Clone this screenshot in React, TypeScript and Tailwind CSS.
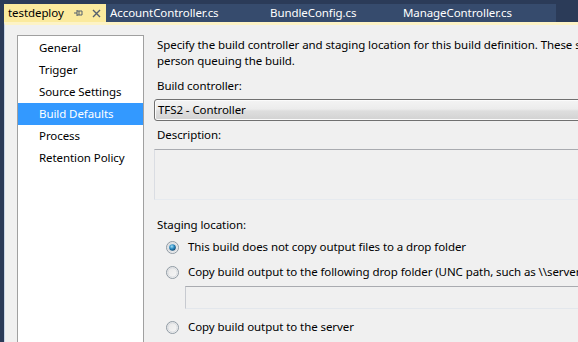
import React from "react";

const navItems = ["General", "Trigger", "Source Settings", "Build Defaults", "Process", "Retention Policy"];

function Radio({ checked }: { checked?: boolean }) {
  return (
    <svg width="13" height="13" viewBox="0 0 13 13" className="shrink-0">
      <defs>
        <linearGradient id={checked ? "rc" : "ru"} x1="0" y1="0" x2="1" y2="1">
          <stop offset="0" stopColor="#e6e6e6" />
          <stop offset="1" stopColor="#f8f8f8" />
        </linearGradient>
        <radialGradient id="dot" cx="0.4" cy="0.35" r="0.7">
          <stop offset="0" stopColor="#a9e0f5" />
          <stop offset="0.5" stopColor="#2a8bc2" />
          <stop offset="1" stopColor="#0d3d66" />
        </radialGradient>
      </defs>
      <circle cx="6.5" cy="6.5" r="6" fill={`url(#${checked ? "rc" : "ru"})`} stroke="#8f9aa3" strokeWidth="1" />
      <circle cx="6.5" cy="6.5" r="4.6" fill="none" stroke="#d2d6da" strokeWidth="0.8" />
      {checked && <circle cx="6.5" cy="6.5" r="3.3" fill="url(#dot)" />}
    </svg>
  );
}

export default function App() {
  return (
    <div
      className="flex h-[342px] w-[578px] flex-col overflow-hidden bg-[#2b3b58] text-[11.5px] tracking-[-0.08px] text-black"
      style={{ fontFamily: '"Segoe UI", "Noto Sans", sans-serif' }}
    >
      {/* Tab strip */}
      <div className="flex h-[22px] shrink-0 pl-[4px] pt-[4px]">
        <div className="flex h-[18px] w-[102px] items-center bg-[#fbea9e] pl-[4px]">
          <span className="w-[66px] leading-[18px]">testdeploy</span>
          <svg width="10" height="8" viewBox="0 0 10 8">
            <path d="M0 4h3M3 1v6M3 2h5v4H3M5 2v4" stroke="#55606e" strokeWidth="1" fill="none" />
          </svg>
          <svg width="9" height="9" viewBox="0 0 9 9" className="ml-[8px]">
            <path d="M1 1l7 7M8 1l-7 7" stroke="#55606e" strokeWidth="1.4" />
          </svg>
        </div>
        <div className="flex h-[18px] w-[450px] items-center bg-[#364b6d] text-white">
          <span className="ml-[4px] w-[160px] leading-[18px]">AccountController.cs</span>
          <span className="w-[133px] leading-[18px]">BundleConfig.cs</span>
          <span className="leading-[18px]">ManageController.cs</span>
        </div>
      </div>

      {/* Body */}
      <div className="flex min-h-0 flex-1 pl-[4px]">
        <div className="flex flex-1 border-l border-t-[3px] border-l-[#c9d6e6] border-t-[#fdf3c6] bg-[#f0f0f0]">
          {/* Nav list */}
          <div className="ml-[12px] mt-[10px] w-[127px] shrink-0 border border-b-0 border-[#a0a0a0] bg-white pt-[1px]">
            {navItems.map((item) => (
              <div
                key={item}
                className={
                  item === "Build Defaults"
                    ? "h-[22px] bg-[#3399ff] pl-[21px] leading-[22px] text-white"
                    : "h-[22px] pl-[21px] leading-[22px]"
                }
              >
                {item}
              </div>
            ))}
          </div>

          {/* Settings */}
          <div className="ml-[10px] flex w-[640px] shrink-0 flex-col pt-[12px]">
            <div className="pl-[3px] leading-[16px]">
              <div className="whitespace-nowrap">
                Specify the build controller and staging location for this build definition. These settings can be
                overridden by the
              </div>
              <div className="whitespace-nowrap">person queuing the build.</div>
            </div>

            <div className="mt-[9px] pl-[3px] leading-[16px]">Build controller:</div>
            <div className="mt-[5px] h-[22px] rounded-[3px] border border-[#707070] bg-[linear-gradient(to_bottom,#f4f4f4_0%,#ececec_45%,#dedede_55%,#d2d2d2_100%)] pl-[3px] leading-[20px] shadow-[inset_0_0_0_1px_#fbfbfb]">
              TFS2 - Controller
            </div>

            <div className="mt-[6px] pl-[3px] leading-[16px]">Description:</div>
            <div className="mt-[6px] h-[51px] border border-x-[#dadde3] border-b-[#e6eaef] border-t-[#a9abb0] bg-[#f0f0f0]" />

            <div className="mt-[17px] pl-[3px] leading-[16px]">Staging location:</div>

            <div className="ml-[12px] mt-[6px] flex h-[16px] items-center gap-[9px]">
              <Radio checked />
              <span className="whitespace-nowrap leading-[16px]">This build does not copy output files to a drop folder</span>
            </div>
            <div className="ml-[12px] mt-[9px] flex h-[16px] items-center gap-[9px]">
              <Radio />
              <span className="whitespace-nowrap leading-[16px]">
                Copy build output to the following drop folder (UNC path, such as \\server\share)
              </span>
            </div>
            <div className="ml-[31px] mt-[6px] h-[23px] border border-x-[#c7cad0] border-b-[#e3e7ec] border-t-[#a9abb0] bg-[#f0f0f0]" />
            <div className="ml-[12px] mt-[10px] flex h-[16px] items-center gap-[9px]">
              <Radio />
              <span className="whitespace-nowrap leading-[16px]">Copy build output to the server</span>
            </div>
          </div>
        </div>
      </div>
    </div>
  );
}
